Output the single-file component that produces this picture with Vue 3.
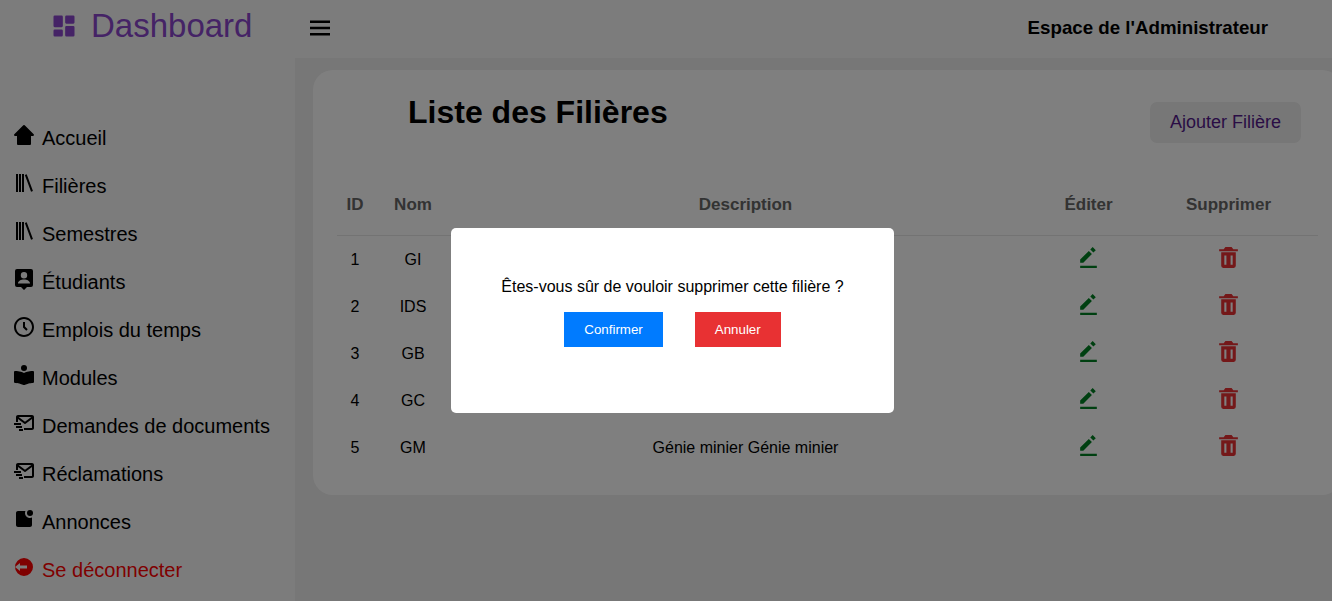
<script setup>
import { ref } from 'vue'

const icons = {
  home: ['M11.3 2.3a1 1 0 0 1 1.4 0l9 9c.6.7.2 1.7-.7 1.7h-2v8a1 1 0 0 1-1 1H6a1 1 0 0 1-1-1v-8H3c-.9 0-1.300-1-.7-1.700z'],
  library: ['M7 3h2v18H7zM4 3h2v18H4zm6 0h2v18h-2zm9.062 17.792-6.223-16.89 1.877-.692 6.223 16.89z'],
  badge: ['M19 2H5a2 2 0 0 0-2 2v14a2 2 0 0 0 2 2h4l3 3 3-3h4a2 2 0 0 0 2-2V4a2 2 0 0 0-2-2zm-7 3a3.200 3.200 0 1 1 0 6.400A3.200 3.200 0 0 1 12 5zm-6 11.500c0-2.500 3-4 6-4s6 1.500 6 4z'],
  time: ['M12 2C6.486 2 2 6.486 2 12s4.486 10 10 10 10-4.486 10-10S17.514 2 12 2zm0 18c-4.411 0-8-3.589-8-8s3.589-8 8-8 8 3.589 8 8-3.589 8-8 8z', 'M13 7h-2v5.414l3.293 3.293 1.414-1.414L13 11.586z'],
  reader: ['M21 8c-.202 0-4.85.029-9 2.008C7.85 8.029 3.202 8 3 8a1 1 0 0 0-1 1v9.883a1 1 0 0 0 .305.719c.195.188.48.305.729.28l.127-.001c.683 0 4.296.098 8.416 2.025.016.008.034.005.05.011.119.049.244.083.373.083s.254-.034.374-.083c.016-.006.034-.003.05-.011 4.12-1.928 7.733-2.025 8.416-2.025l.127.001c.238.025.533-.092.729-.28.194-.189.304-.449.304-.719V9a1 1 0 0 0-1-1z', 'M12 2a3 3 0 1 1 0 6 3 3 0 0 1 0-6z'],
  mail: ['M20 4H6c-1.103 0-2 .897-2 2v5h2V8l6.4 4.8a1.001 1.001 0 0 0 1.2 0L20 8v9h-8v2h8c1.103 0 2-.897 2-2V6c0-1.103-.897-2-2-2zm-7 6.75L6.666 6h12.668L13 10.75z', 'M2 12h7v2H2zm2 3h6v2H4zm3 3h4v2H7z'],
  notification: ['M18 3a3 3 0 1 1 0 6 3 3 0 0 1 0-6z', 'M18 11c-2.757 0-5-2.243-5-5 0-.712.153-1.387.422-2H6c-1.103 0-2 .897-2 2v12c0 1.103.897 2 2 2h12c1.103 0 2-.897 2-2v-7.422A4.962 4.962 0 0 1 18 11z'],
  logout: ['M12 3a9 9 0 1 0 0 18 9 9 0 0 0 0-18zm3 10.500H8V16l-5-4 5-4v2.500h7z']
}

const menu = [
  { label: 'Accueil', icon: 'home' },
  { label: 'Filières', icon: 'library' },
  { label: 'Semestres', icon: 'library' },
  { label: 'Étudiants', icon: 'badge' },
  { label: 'Emplois du temps', icon: 'time' },
  { label: 'Modules', icon: 'reader' },
  { label: 'Demandes de documents', icon: 'mail' },
  { label: 'Réclamations', icon: 'mail' },
  { label: 'Annonces', icon: 'notification' },
  { label: 'Se déconnecter', icon: 'logout', danger: true }
]

const filieres = ref([
  { id: 1, nom: 'GI', description: 'Génie informatique' },
  { id: 2, nom: 'IDS', description: 'Ingénierie des données' },
  { id: 3, nom: 'GB', description: 'Génie biologique' },
  { id: 4, nom: 'GC', description: 'Génie civil' },
  { id: 5, nom: 'GM', description: 'Génie minier Génie minier' }
])

const pendingId = ref(1)

function confirmDelete() {
  filieres.value = filieres.value.filter((f) => f.id !== pendingId.value)
  pendingId.value = null
}
</script>

<template>
  <div class="layout">
    <aside class="sidebar">
      <a class="brand" href="#">
        <svg class="brand-icon" viewBox="0 0 24 24" aria-hidden="true">
          <path d="M4 13h6a1 1 0 0 0 1-1V4a1 1 0 0 0-1-1H4a1 1 0 0 0-1 1v8a1 1 0 0 0 1 1zm-1 7a1 1 0 0 0 1 1h6a1 1 0 0 0 1-1v-4a1 1 0 0 0-1-1H4a1 1 0 0 0-1 1v4zm10 0a1 1 0 0 0 1 1h6a1 1 0 0 0 1-1v-7a1 1 0 0 0-1-1h-6a1 1 0 0 0-1 1v7zm1-10h6a1 1 0 0 0 1-1V4a1 1 0 0 0-1-1h-6a1 1 0 0 0-1 1v5a1 1 0 0 0 1 1z" />
        </svg>
        <span>Dashboard</span>
      </a>
      <nav>
        <ul class="menu">
          <li v-for="item in menu" :key="item.label">
            <a href="#" class="menu-link" :class="{ danger: item.danger }">
              <svg class="menu-icon" viewBox="0 0 24 24" aria-hidden="true">
                <path v-for="d in icons[item.icon]" :key="d" :d="d" fill-rule="evenodd" />
              </svg>
              <span>{{ item.label }}</span>
            </a>
          </li>
        </ul>
      </nav>
    </aside>

    <div class="content">
      <header class="topbar">
        <button class="icon-button" type="button" aria-label="Menu">
          <svg class="burger" viewBox="0 0 24 24" aria-hidden="true">
            <path d="M4 6h16v2H4zm0 5h16v2H4zm0 5h16v2H4z" />
          </svg>
        </button>
        <h3>Espace de l'Administrateur</h3>
      </header>

      <main class="main">
        <section class="card">
          <div class="card-head">
            <h1>Liste des Filières</h1>
            <a class="add" href="#">Ajouter Filière</a>
          </div>
          <table>
            <colgroup>
              <col class="col-id" />
              <col class="col-nom" />
              <col />
              <col class="col-edit" />
              <col class="col-delete" />
            </colgroup>
            <thead>
              <tr>
                <th>ID</th>
                <th>Nom</th>
                <th>Description</th>
                <th>Éditer</th>
                <th>Supprimer</th>
              </tr>
            </thead>
            <tbody>
              <tr v-for="f in filieres" :key="f.id">
                <td>{{ f.id }}</td>
                <td>{{ f.nom }}</td>
                <td>{{ f.description }}</td>
                <td>
                  <button class="icon-button edit" type="button" aria-label="Éditer">
                    <svg class="action" viewBox="0 0 24 24" aria-hidden="true">
                      <path d="m16 2.012 3 3L16.713 7.3l-3-3zM4 14v3h3l8.299-8.287-3-3zm0 6h16v2H4z" />
                    </svg>
                  </button>
                </td>
                <td>
                  <button class="icon-button delete" type="button" aria-label="Supprimer" @click="pendingId = f.id">
                    <svg class="action" viewBox="0 0 24 24" aria-hidden="true">
                      <path d="M6 7H5v13a2 2 0 0 0 2 2h10a2 2 0 0 0 2-2V7H6zm4 12H8v-9h2v9zm6 0h-2v-9h2v9zm.618-15L15 2H9L7.382 4H3v2h18V4z" />
                    </svg>
                  </button>
                </td>
              </tr>
            </tbody>
          </table>
        </section>
      </main>
    </div>

    <div v-if="pendingId !== null" class="overlay">
      <div class="modal" role="dialog" aria-modal="true" aria-labelledby="confirm-text">
        <p id="confirm-text">Êtes-vous sûr de vouloir supprimer cette filière ?</p>
        <div class="modal-actions">
          <button class="confirm" type="button" @click="confirmDelete">Confirmer</button>
          <button class="cancel" type="button" @click="pendingId = null">Annuler</button>
        </div>
      </div>
    </div>
  </div>
</template>

<style>
body {
  margin: 0;
}
</style>

<style scoped>
.layout {
  display: flex;
  min-height: 100vh;
  overflow: hidden;
  background: #eee;
  color: #000;
  font-family: "Liberation Sans", Arial, sans-serif;
}

.layout * {
  box-sizing: border-box;
}

svg {
  display: block;
  fill: currentColor;
}

h1,
h3,
p {
  margin: 0;
}

.icon-button {
  padding: 0;
  border: 0;
  background: none;
  color: inherit;
  cursor: pointer;
}

.sidebar {
  flex: 0 0 295px;
  background: #f9f9f9;
}

.brand {
  display: flex;
  align-items: center;
  gap: 13px;
  height: 52px;
  padding-left: 50px;
  color: #8a46cc;
  font-size: 33px;
  text-decoration: none;
}

.brand-icon {
  width: 28px;
  height: 28px;
}

.menu {
  margin: 62px 0 0;
  padding: 0;
  list-style: none;
}

.menu-link {
  display: flex;
  align-items: center;
  gap: 6px;
  height: 48px;
  padding-left: 12px;
  color: #000;
  font-size: 20px;
  text-decoration: none;
  white-space: nowrap;
}

.menu-link.danger {
  color: #f00;
}

.menu-icon {
  width: 24px;
  height: 30px;
  padding-bottom: 6px;
}

.content {
  flex: 1;
  min-width: 0;
}

.topbar {
  display: flex;
  align-items: center;
  justify-content: space-between;
  height: 58px;
  padding: 0 64px 2px 10px;
  background: #f9f9f9;
}

.burger {
  width: 30px;
  height: 30px;
}

.main {
  padding: 12px 0 0 18px;
}

.card {
  margin-right: -10px;
  padding: 24px;
  border-radius: 20px;
  background: #fff;
}

.card-head {
  display: flex;
  align-items: flex-start;
  justify-content: space-between;
  padding: 0 17px 0 71px;
}

h1 {
  line-height: 36px;
  font-size: 32px;
}

.add {
  margin-top: 8px;
  padding: 10px 20px;
  border-radius: 7px;
  background: #eee;
  color: #551a8b;
  font-size: 18px;
  line-height: 21px;
  text-decoration: none;
}

table {
  width: 100%;
  margin-top: 29px;
  border-collapse: separate;
  border-spacing: 0;
  table-layout: fixed;
  text-align: center;
}

.col-id {
  width: 36px;
}

.col-nom {
  width: 80px;
}

.col-edit {
  width: 101px;
}

.col-delete {
  width: 179px;
}

th,
td {
  padding: 0;
}

th {
  height: 64px;
  padding-top: 2px;
  border-bottom: 1px solid #e6e6e6;
  color: #666;
  font-size: 17px;
}

td {
  height: 47px;
  font-size: 16px;
}

td .icon-button {
  display: block;
  margin: 0 auto;
  padding-bottom: 4px;
}

.action {
  width: 25px;
  height: 25px;
}

.edit {
  color: #008022;
}

.delete {
  color: #e83133;
}

.overlay {
  position: fixed;
  inset: 0;
  display: flex;
  align-items: center;
  justify-content: center;
  padding: 40px 0 0 13px;
  background: rgba(0, 0, 0, 0.5);
}

.modal {
  padding: 50px 50px 66px;
  border-radius: 5px;
  background: #fff;
  text-align: center;
}

.modal-actions {
  display: flex;
  justify-content: center;
  gap: 32px;
  margin-top: 16px;
}

.modal-actions button {
  padding: 10px 20px;
  border: 0;
  color: #fff;
  font-family: inherit;
  cursor: pointer;
}

.modal-actions .confirm {
  background: #007bff;
}

.modal-actions .cancel {
  background: #e83133;
}
</style>
